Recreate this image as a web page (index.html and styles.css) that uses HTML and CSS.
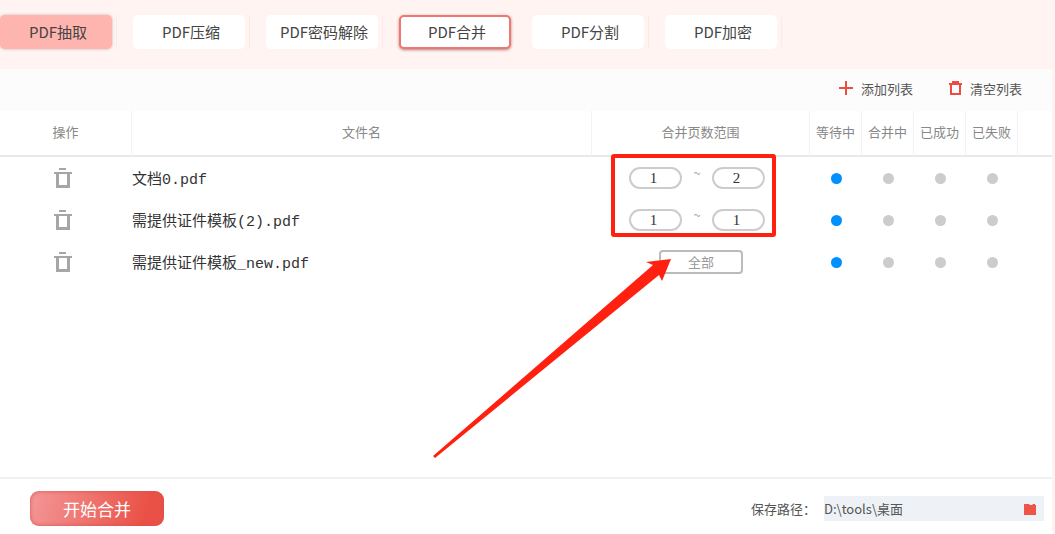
FILE: index.html
```html
<!DOCTYPE html>
<html lang="zh-CN">
<head>
    <meta charset="UTF-8">
    <meta name="viewport" content="width=device-width, initial-scale=1.0">
    <title>PDF合并</title>
    <link rel="stylesheet" href="styles.css">
</head>
<body>

    <!-- Icons -->
    <svg class="sprite" aria-hidden="true">
        <symbol id="trash" viewBox="0 0 18 20">
            <path d="M5 0h7v2H5zM0 4h18v2h-2v14H2V6H0zM5 6v11h8V6z" fill-rule="evenodd"/>
        </symbol>
    </svg>

    <!-- Tabs -->
    <nav>
        <ul class="tabs">
            <li><button class="tab tab-hover">PDF抽取</button></li>
            <li><button class="tab">PDF压缩</button></li>
            <li><button class="tab">PDF密码解除</button></li>
            <li class="current"><button class="tab tab-active">PDF合并</button></li>
            <li><button class="tab">PDF分割</button></li>
            <li><button class="tab">PDF加密</button></li>
        </ul>
    </nav>

    <main class="panel">
        <div class="toolbar">
            <button class="tool">
                <svg width="14" height="14" viewBox="0 0 14 14"><path d="M7 0v14M0 7h14" stroke="#ee4b43" stroke-width="2"/></svg>
                添加列表
            </button>
            <button class="tool">
                <svg width="13" height="14" viewBox="0 0 13 14"><path d="M3 1h7M0 3h13M2 3v10h9V3" fill="none" stroke="#ee4b43" stroke-width="2"/></svg>
                清空列表
            </button>
        </div>

        <!-- File list -->
        <section class="list">
            <table>
                <thead>
                    <tr>
                        <th class="col-action">操作</th>
                        <th>文件名</th>
                        <th class="col-range">合并页数范围</th>
                        <th class="col-state">等待中</th>
                        <th class="col-state">合并中</th>
                        <th class="col-state">已成功</th>
                        <th class="col-state">已失败</th>
                        <th class="col-end"></th>
                    </tr>
                </thead>
                <tbody>
                    <tr>
                        <td class="action"><button class="delete" aria-label="删除"><svg width="18" height="20"><use href="#trash"/></svg></button></td>
                        <td class="name">文档0.pdf</td>
                        <td>
                            <div class="range">
                                <input type="text" value="1" aria-label="起始页">
                                <span>~</span>
                                <input type="text" value="2" aria-label="结束页">
                            </div>
                        </td>
                        <td><i class="dot on"></i></td>
                        <td><i class="dot"></i></td>
                        <td><i class="dot"></i></td>
                        <td><i class="dot"></i></td>
                        <td></td>
                    </tr>
                    <tr>
                        <td class="action"><button class="delete" aria-label="删除"><svg width="18" height="20"><use href="#trash"/></svg></button></td>
                        <td class="name">需提供证件模板(2).pdf</td>
                        <td>
                            <div class="range">
                                <input type="text" value="1" aria-label="起始页">
                                <span>~</span>
                                <input type="text" value="1" aria-label="结束页">
                            </div>
                        </td>
                        <td><i class="dot on"></i></td>
                        <td><i class="dot"></i></td>
                        <td><i class="dot"></i></td>
                        <td><i class="dot"></i></td>
                        <td></td>
                    </tr>
                    <tr>
                        <td class="action"><button class="delete" aria-label="删除"><svg width="18" height="20"><use href="#trash"/></svg></button></td>
                        <td class="name">需提供证件模板_new.pdf</td>
                        <td><button class="all">全部</button></td>
                        <td><i class="dot on"></i></td>
                        <td><i class="dot"></i></td>
                        <td><i class="dot"></i></td>
                        <td><i class="dot"></i></td>
                        <td></td>
                    </tr>
                </tbody>
            </table>

            <!-- Callouts over the list -->
            <div class="mark-box"></div>
            <svg class="mark-arrow" width="245" height="205" viewBox="0 0 245 205" aria-hidden="true">
                <path d="M241 4L216 7L223 10L3 201L5 203L229 20L232 26z" fill="#ff2010"/>
            </svg>
        </section>

        <footer class="footer">
            <button class="start">开始合并</button>
            <label for="savePath">保存路径：</label>
            <div class="path">
                <input type="text" id="savePath" value="D:\tools\桌面">
                <button class="browse" aria-label="选择文件夹">
                    <svg width="12" height="12" viewBox="0 0 12 12"><path d="M0 1h5l1 1h2l1-1h2v1h1v10H0z" fill="#ee5549"/></svg>
                </button>
            </div>
        </footer>
    </main>

</body>
</html>
```

FILE: styles.css
```css
* {
    margin: 0;
    padding: 0;
    box-sizing: border-box;
}

body {
    font-family: 'Noto Sans CJK SC', sans-serif;
    font-size: 13px;
    color: #555;
    background: #fff4f2;
    min-height: 100vh;
    display: flex;
    flex-direction: column;
}

button,
input {
    font: inherit;
    color: inherit;
    border: none;
    background: none;
}

button {
    cursor: pointer;
}

.sprite {
    position: absolute;
    width: 0;
    height: 0;
}

/* Tabs */
.tabs {
    display: flex;
    list-style: none;
    padding: 15px 0 20px;
}

.tabs li {
    padding-right: 4px;
    margin-right: 16px;
    border-right: 1px solid #f9e9e7;
}

.tabs .current {
    border-color: transparent;
}

.tab {
    display: block;
    width: 112px;
    height: 34px;
    padding-left: 4px;
    border-radius: 5px;
    background: #fff;
    font-size: 15px;
    line-height: 34px;
    color: #444;
}

.tab-hover {
    background: #ffb5af;
    box-shadow: 0 0 3px rgba(120, 80, 80, 0.4);
}

.tab-active {
    border: 2px solid #ee7770;
    line-height: 30px;
    box-shadow: 0 1px 3px rgba(120, 50, 50, 0.6);
}

.panel {
    flex: 1;
    display: flex;
    flex-direction: column;
    margin-right: 3px;
    background: #fff;
}

.toolbar {
    display: flex;
    justify-content: flex-end;
    gap: 36px;
    height: 42px;
    padding: 0 30px 4px 0;
    background: #fcfcfc;
}

.tool {
    display: flex;
    align-items: center;
    gap: 8px;
}

/* File list */
.list {
    flex: 1;
    position: relative;
}

table {
    width: 100%;
    table-layout: fixed;
    border-collapse: separate;
    border-spacing: 0;
}

th {
    height: 46px;
    padding-bottom: 4px;
    font-weight: normal;
    color: #888;
    border-right: 1px solid #f3f3f3;
    border-bottom: 2px solid #e9e9e9;
    white-space: nowrap;
}

th:last-child {
    border-right: none;
}

td {
    height: 42px;
    text-align: center;
    vertical-align: middle;
}

.col-action {
    width: 132px;
}

.col-range {
    width: 218px;
}

.col-state {
    width: 52px;
}

.col-end {
    width: 34px;
}

.action {
    padding-right: 6px;
}

.delete {
    display: block;
    margin: 0 auto;
    width: 18px;
    height: 20px;
}

.delete svg {
    display: block;
    fill: #a6a6a6;
}

.name {
    font-family: 'Liberation Mono', 'Noto Sans CJK SC', monospace;
    font-size: 15px;
    text-align: left;
    color: #333;
}

.range {
    display: flex;
    justify-content: center;
    padding-right: 8px;
}

.range input {
    width: 53px;
    height: 22px;
    border: 2px solid #ccc;
    border-radius: 11px;
    padding-right: 4px;
    font-family: 'Liberation Serif', serif;
    font-size: 15px;
    text-align: center;
    color: #333;
}

.range span {
    width: 30px;
    line-height: 12px;
    color: #aaa;
}

.all {
    width: 84px;
    height: 24px;
    border: 2px solid #bbb;
    border-radius: 4px;
    line-height: 20px;
    color: #999;
}

.dot {
    display: block;
    width: 11px;
    height: 11px;
    margin: 0 auto;
    border-radius: 50%;
    background: #ccc;
}

.dot.on {
    background: #0090ff;
}

.mark-box {
    position: absolute;
    top: 43px;
    right: 276px;
    width: 165px;
    height: 83px;
    border: 4px solid #ff2010;
    border-radius: 3px;
    pointer-events: none;
}

.mark-arrow {
    position: absolute;
    top: 144px;
    right: 377px;
    pointer-events: none;
}

/* Footer */
.footer {
    display: flex;
    align-items: center;
    padding: 12px 8px 8px 30px;
    border-top: 2px solid #eef2f2;
}

.start {
    width: 134px;
    height: 35px;
    margin-right: auto;
    border-radius: 9px;
    background: linear-gradient(105deg, #f49898, #ea5146 85%);
    box-shadow: inset 0 0 4px #d9524d;
    font-size: 17px;
    line-height: 35px;
    color: #fff;
}

.path {
    display: flex;
    width: 220px;
    height: 25px;
    margin-left: 8px;
    background: #eef2f6;
}

.path input {
    flex: 1;
    min-width: 0;
}

.browse {
    display: flex;
    align-items: center;
    padding: 0 8px;
}
```
